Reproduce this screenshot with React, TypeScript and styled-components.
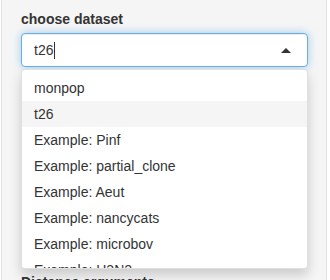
import styled, { createGlobalStyle } from "styled-components"

const GlobalStyle = createGlobalStyle`
    html, body {
        margin: 0;
        padding: 0;
        height: 280px;
        overflow: hidden;
        background: #ffffff;
        font-family: "Liberation Sans", Arial, Helvetica, sans-serif;
        font-size: 14px;
        color: #333333;
    }
`

const Page = styled.div`
    padding: 0 3px 0 1px;
`

const Well = styled.div`
    min-height: 320px;
    background-color: #f5f5f5;
    border-left: 1px solid #e3e3e3;
    border-right: 1px solid #e3e3e3;
    padding: 9px 18px 0 19px;
`

const FormGroup = styled.div<{ gap?: number }>`
    position: relative;
    margin-top: ${props => props.gap || 0}px;
`

const Label = styled.label`
    display: block;
    font-weight: bold;
    font-size: 14px;
    line-height: 20px;
    margin-bottom: 4px;
    color: #333333;
`

const SelectInput = styled.div`
    display: flex;
    align-items: center;
    height: 34px;
    box-sizing: border-box;
    padding: 0 16px 0 12px;
    background: #ffffff;
    border: 1px solid #66afe9;
    border-radius: 4px;
    box-shadow: inset 0 1px 1px rgba(0, 0, 0, 0.075), 0 0 8px rgba(102, 175, 233, 0.6);
`

const Value = styled.span`
    font-size: 14px;
    line-height: 20px;
    color: #333333;
`

const Caret = styled.span`
    display: inline-block;
    width: 1px;
    height: 17px;
    margin-left: 1px;
    background: #333333;
`

const Arrow = styled.span`
    margin-left: auto;
    width: 0;
    height: 0;
    border-style: solid;
    border-width: 0 5px 5px 5px;
    border-color: transparent transparent #333333 transparent;
`

const Dropdown = styled.div`
    position: absolute;
    top: 60px;
    left: 0;
    right: 0;
    z-index: 10;
    background: #ffffff;
    border: 1px solid rgba(0, 0, 0, 0.12);
    border-radius: 4px;
    box-shadow: 0 6px 12px rgba(0, 0, 0, 0.175);
`

const DropdownContent = styled.div`
    max-height: 198px;
    overflow: hidden;
    padding: 5px 0;
    box-sizing: border-box;
`

const Option = styled.div<{ active?: boolean }>`
    padding: 3px 12px;
    line-height: 20px;
    font-size: 14px;
    color: #333333;
    background: ${props => props.active ? "#f5f5f5" : "transparent"};
`

const options = [
    "monpop",
    "t26",
    "Example: Pinf",
    "Example: partial_clone",
    "Example: Aeut",
    "Example: nancycats",
    "Example: microbov",
    "Example: H3N2",
    "Example: H1N1",
]

const App = () => {
    return (
        <Page>
            <GlobalStyle />
            <Well>
                <FormGroup>
                    <Label>choose dataset</Label>
                    <SelectInput>
                        <Value>t26</Value>
                        <Caret />
                        <Arrow />
                    </SelectInput>
                    <Dropdown>
                        <DropdownContent>
                            {options.map(o => (
                                <Option key={o} active={o === "t26"}>{o}</Option>
                            ))}
                        </DropdownContent>
                    </Dropdown>
                </FormGroup>
                <FormGroup gap={205}>
                    <Label>Distance arguments</Label>
                </FormGroup>
            </Well>
        </Page>
    );
};

export default App;
